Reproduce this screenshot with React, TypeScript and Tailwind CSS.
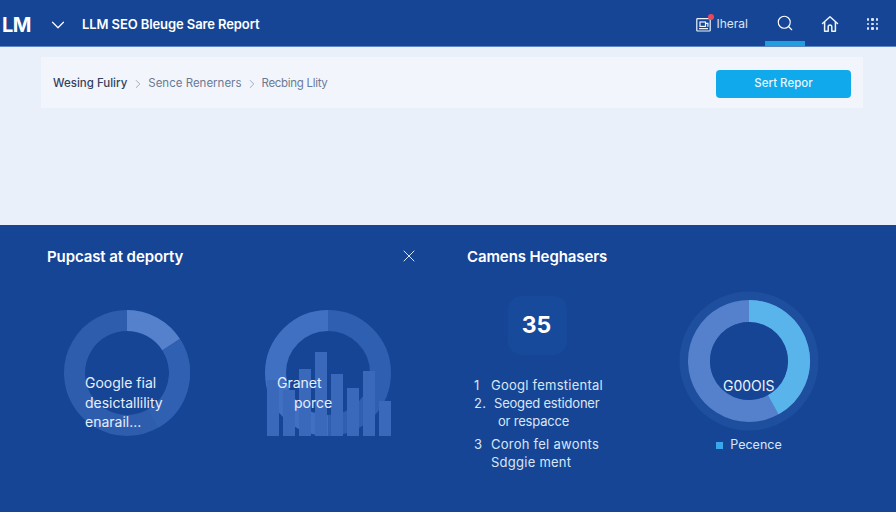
import React from 'react';
import { ChevronDown, ChevronRight, Search, X } from 'lucide-react';

// one arc of a donut, angles in degrees clockwise from 12 o'clock
function Arc({ c, r, from, to, width, color }: { c: number; r: number; from: number; to: number; width: number; color: string }) {
  const pt = (a: number) => {
    const t = ((a - 90) * Math.PI) / 180;
    return `${c + r * Math.cos(t)} ${c + r * Math.sin(t)}`;
  };
  const large = to - from > 180 ? 1 : 0;
  return <path d={`M ${pt(from)} A ${r} ${r} 0 ${large} 1 ${pt(to)}`} fill="none" stroke={color} strokeWidth={width} />;
}

const bars = [56, 46, 67, 84, 62, 48, 65, 35];

function BarChart() {
  return (
    <div className="flex items-end gap-1 h-[84px]">
      {bars.map((h, i) => (
        <div key={i} className="w-3 bg-[#3a69bb]" style={{ height: h }} />
      ))}
    </div>
  );
}

function AppsIcon() {
  return (
    <div className="grid grid-cols-3 gap-[2px]">
      {Array.from({ length: 9 }).map((_, i) => (
        <div key={i} className="w-[2.5px] h-[2.5px] bg-[#dbe6f7] rounded-[1px]" />
      ))}
    </div>
  );
}

function HomeIcon() {
  return (
    <svg width="18" height="18" viewBox="0 0 18 18" fill="none" stroke="#eef4fc" strokeWidth="1.5" strokeLinejoin="round" strokeLinecap="round">
      <path d="M1.5 8.5 9 1.8l7.5 6.7" />
      <path d="M3.6 7.2v9h3.6v-4.4a1.8 1.8 0 0 1 3.6 0v4.4h3.6v-9" />
    </svg>
  );
}

function InboxIcon() {
  return (
    <svg width="15" height="15" viewBox="0 0 15 15" fill="none" stroke="#eef4fc" strokeWidth="1.2">
      <rect x="0.8" y="1.6" width="13.4" height="12.4" rx="0.8" />
      <rect x="4" y="5" width="5.5" height="4.4" />
      <path d="M9.5 6.4h2.4v3.4M3 11.6h9" />
    </svg>
  );
}

export default function App() {
  return (
    <div className="w-[896px] h-[512px] overflow-hidden flex flex-col bg-[#e9f0fa]" style={{ fontFamily: 'Inter, "Liberation Sans", sans-serif' }}>
      {/* top bar */}
      <header className="h-[47px] shrink-0 bg-[#164595] border-b border-[#5f86c4] flex items-center text-white">
        <div className="flex items-center pt-[3px]">
          <span className="ml-[2px] w-[32px] text-[20px] font-bold leading-none tracking-[-0.5px]">LM</span>
          <ChevronDown className="ml-[13px] w-[22px] h-[22px]" strokeWidth={1.3} />
          <span className="ml-[13px] text-[13px] font-semibold tracking-[-0.1px]">LLM SEO Bleuge Sare Report</span>
        </div>
        <div className="ml-auto flex items-center h-full">
          <div className="relative mt-[3px]">
            <InboxIcon />
            <span className="absolute -top-[3px] right-[-3px] w-[6px] h-[6px] rounded-full bg-[#e8485a]" />
          </div>
          <span className="ml-[6px] mt-[2px] text-[12px] text-[#dbe6f7] w-[33px]">Iheral</span>
          <div className="relative w-[40px] h-full ml-[15px] flex items-center justify-center">
            <Search className="w-[18px] h-[18px]" strokeWidth={1.5} />
            <div className="absolute bottom-0 left-0 right-0 h-[5px] bg-[#1f9fe0]" />
          </div>
          <div className="ml-[16px] mt-[2px] w-[18px] flex justify-center"><HomeIcon /></div>
          <div className="ml-[28px] mt-[2px] mr-[18px]"><AppsIcon /></div>
        </div>
      </header>

      {/* breadcrumb section */}
      <section className="h-[178px] shrink-0 pt-[10px] pr-[33px] pl-[41px]">
        <div className="h-[51px] bg-[#f2f6fc] flex items-center pt-[3px] px-[12px] text-[11.5px]">
          <span className="font-medium text-[#33425e]">Wesing Fuliry</span>
          <ChevronRight className="ml-[4px] mr-[3px] w-[14px] h-[14px] text-[#7b8aa3]" strokeWidth={1.2} />
          <span className="text-[#6b7a94]">Sence Renerners</span>
          <ChevronRight className="ml-[3px] mr-[3px] w-[14px] h-[14px] text-[#7b8aa3]" strokeWidth={1.2} />
          <span className="text-[#6b7a94] tracking-[-0.3px]">Recbing Llity</span>
          <button className="ml-auto w-[135px] h-[28px] rounded-[4px] bg-[#0fa9ec] text-[#e6f6ff] text-[11.5px] font-medium">Sert Repor</button>
        </div>
      </section>

      {/* report panels */}
      <section className="flex-1 bg-[#164595] flex text-white">
        <div className="w-[467px] pl-[47px] pt-[23px]">
          <div className="flex items-center justify-between w-[372px] h-[18px]">
            <h2 className="text-[15px] font-semibold tracking-[-0.1px]">Pupcast at deporty</h2>
            <X className="w-[20px] h-[20px] -mt-[3px] text-[#dbe6f7]" strokeWidth={1.2} />
          </div>
          <div className="flex mt-[44px] ml-[17px]">
            <div className="relative w-[126px] h-[126px]">
              <svg width="126" height="126" viewBox="0 0 126 126">
                <Arc c={63} r={52.5} from={0} to={359.99} width={21} color="#2e5dae" />
                <Arc c={63} r={52.5} from={0} to={57} width={21} color="#5580cb" />
                <Arc c={63} r={52.5} from={58} to={150} width={21} color="#3060b1" />
              </svg>
              <p className="absolute left-[21px] top-[63px] w-[100px] text-[14px] leading-[19.5px] text-[#e6effb]">
                Google fial<br />desictallility<br />enarail...
              </p>
            </div>
            <div className="relative ml-[74px] w-[130px] h-[126px]">
              <svg className="ml-[1px]" width="126" height="126" viewBox="0 0 126 126">
                <Arc c={63} r={52.5} from={180} to={360} width={21} color="#4070c2" />
                <Arc c={63} r={52.5} from={0} to={180} width={21} color="#2f5fb0" />
              </svg>
              <div className="absolute left-[3px] bottom-0"><BarChart /></div>
              <p className="absolute left-[13px] top-[63px] text-[14px] leading-[19.5px] text-[#e6effb]">
                Granet<br /><span className="ml-[17px]">porce</span>
              </p>
            </div>
          </div>
        </div>

        <div className="flex-1 flex">
          <div className="w-[212px] pt-[21px]">
            <h2 className="text-[15px] font-semibold tracking-[-0.1px]">Camens Heghasers</h2>
            <div className="mt-[27px] ml-[41px] w-[59px] h-[59px] pr-[2px] pt-[1px] rounded-[14px] bg-[#184a9b] flex items-center justify-center text-[23px] font-bold">35</div>
            <ol className="mt-[21px] text-[13px] tracking-[0.25px] leading-[18px] text-[#d9e5f7]">
              <li className="flex"><span className="w-[24px] pl-[7px]">1</span><span>Googl femstiental</span></li>
              <li className="flex"><span className="w-[27px] pl-[7px]">2.</span><span className="tracking-[-0.2px]">Seoged estidoner<br /><span className="ml-[4px]">or respacce</span></span></li>
              <li className="flex mt-[5px]"><span className="w-[24px] pl-[7px]">3</span><span>Coroh fel awonts<br />Sdggie ment</span></li>
            </ol>
          </div>
          <div className="pt-[66px] w-[140px] flex flex-col items-center">
            <div className="relative w-[140px] h-[140px]">
              <svg width="140" height="140" viewBox="0 0 140 140">
                <circle cx="70" cy="70" r="69.5" fill="#1e4e9e" />
                <Arc c={70} r={50} from={0} to={359.99} width={22} color="#5580cc" />
                <Arc c={70} r={50} from={0} to={151} width={22} color="#58b4ea" />
                <circle cx="70" cy="70" r="39" fill="#164595" />
              </svg>
              <span className="absolute left-[44px] top-[86px] text-[14px] leading-[18px] text-[#eef4fc]">G00OIS</span>
            </div>
            <div className="mt-[5px] flex items-center text-[12.5px] text-[#d9e5f7]">
              <span className="w-[7px] h-[7px] bg-[#3aa6ec] mr-[7px]" />
              Pecence
            </div>
          </div>
        </div>
      </section>
    </div>
  );
}
